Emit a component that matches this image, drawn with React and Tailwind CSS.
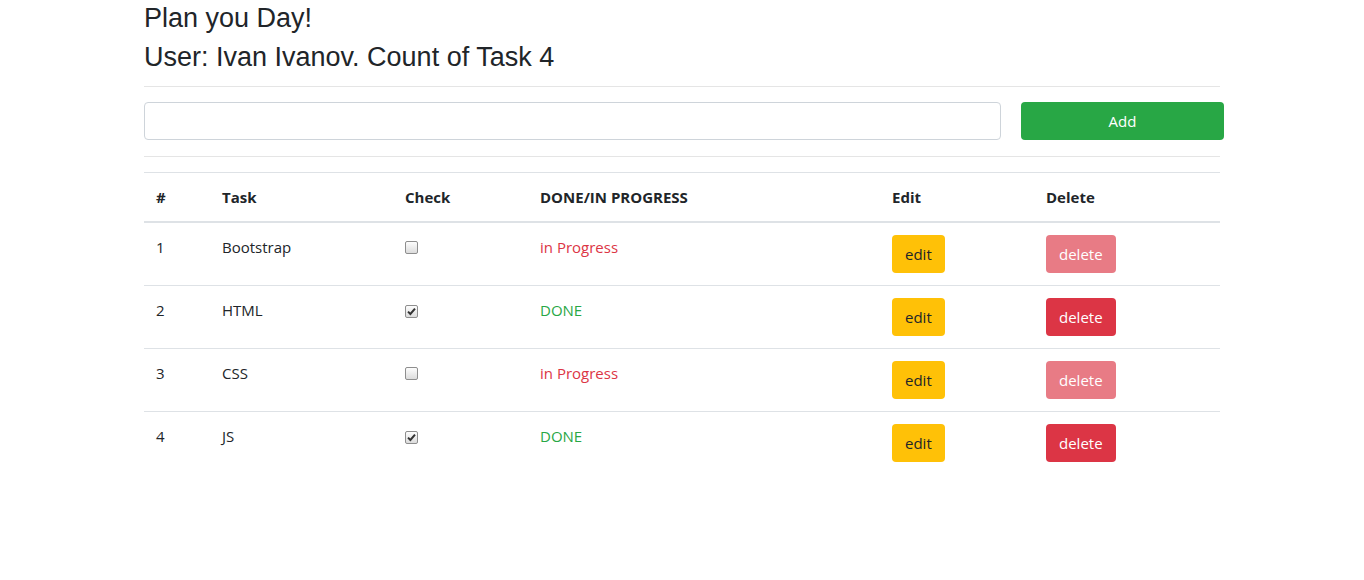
const tasks = [
  { id: 1, name: "Bootstrap", done: false },
  { id: 2, name: "HTML", done: true },
  { id: 3, name: "CSS", done: false },
  { id: 4, name: "JS", done: true },
];

function Checkbox({ checked }) {
  return (
    <span className="mt-[6px] inline-flex h-[13px] w-[13px] items-center justify-center rounded-[2px] border border-[#8e8e8e] bg-gradient-to-b from-[#fdfdfd] to-[#dcdcdc]">
      {checked && (
        <svg width="9" height="9" viewBox="0 0 9 9">
          <path d="M1 4.6 L3.4 7 L8 1.6" fill="none" stroke="#333" strokeWidth="2" />
        </svg>
      )}
    </span>
  );
}

export default function App() {
  const body = { fontFamily: '"Open Sans", "Noto Sans", sans-serif' };
  const heading = { fontFamily: '"Liberation Sans", Arial, sans-serif' };

  return (
    <div className="min-h-[580px] bg-white text-[#212529]" style={body}>
      <div className="ml-[144px] w-[1080px]">
        <h3 className="mb-[3px] text-[27px] leading-[36px]" style={heading}>
          Plan you Day!
        </h3>
        <h3 className="text-[27px] leading-[36px]" style={heading}>
          User: Ivan Ivanov. Count of Task 4
        </h3>

        <hr className="mt-[11px] w-[1076px] border-t border-[#e5e5e5]" />

        <div className="mt-[15px] flex items-center gap-[20px]">
          <input className="h-[38px] w-[857px] rounded-[4px] border border-[#ced4da] px-3 outline-none" />
          <button className="h-[38px] w-[203px] rounded-[4px] bg-[#28a745] text-[15px] text-white">Add</button>
        </div>

        <hr className="mt-[16px] w-[1076px] border-t border-[#e5e5e5]" />

        <table className="mt-[15px] w-[1076px] table-fixed border-collapse text-[15px] leading-[24px]">
          <colgroup>
            <col className="w-[66px]" />
            <col className="w-[183px]" />
            <col className="w-[135px]" />
            <col className="w-[352px]" />
            <col className="w-[154px]" />
            <col className="w-[186px]" />
          </colgroup>
          <thead>
            <tr className="border-t border-b-2 border-t-[#dee2e6] border-b-[#dee2e6] text-left">
              <th className="p-3 font-bold">#</th>
              <th className="p-3 font-bold">Task</th>
              <th className="p-3 font-bold">Check</th>
              <th className="p-3 font-bold">DONE/IN PROGRESS</th>
              <th className="p-3 font-bold">Edit</th>
              <th className="p-3 font-bold">Delete</th>
            </tr>
          </thead>
          <tbody>
            {tasks.map((t, i) => (
              <tr key={t.id} className={i > 0 ? "border-t border-[#dee2e6]" : ""}>
                <td className="p-3 align-top">{t.id}</td>
                <td className="p-3 align-top">{t.name}</td>
                <td className="p-3 align-top">
                  <Checkbox checked={t.done} />
                </td>
                <td className={"p-3 align-top " + (t.done ? "text-[#28a745]" : "text-[#dc3545]")}>
                  {t.done ? "DONE" : "in Progress"}
                </td>
                <td className="p-3 align-top">
                  <button className="h-[38px] rounded-[4px] bg-[#ffc107] px-[13px] text-[#212529]">edit</button>
                </td>
                <td className="p-3 align-top">
                  <button
                    className={
                      "h-[38px] rounded-[4px] px-[13px] text-white " +
                      (t.done ? "bg-[#dc3545]" : "bg-[#dc3545] opacity-65")
                    }
                  >
                    delete
                  </button>
                </td>
              </tr>
            ))}
          </tbody>
        </table>
      </div>
    </div>
  );
}
